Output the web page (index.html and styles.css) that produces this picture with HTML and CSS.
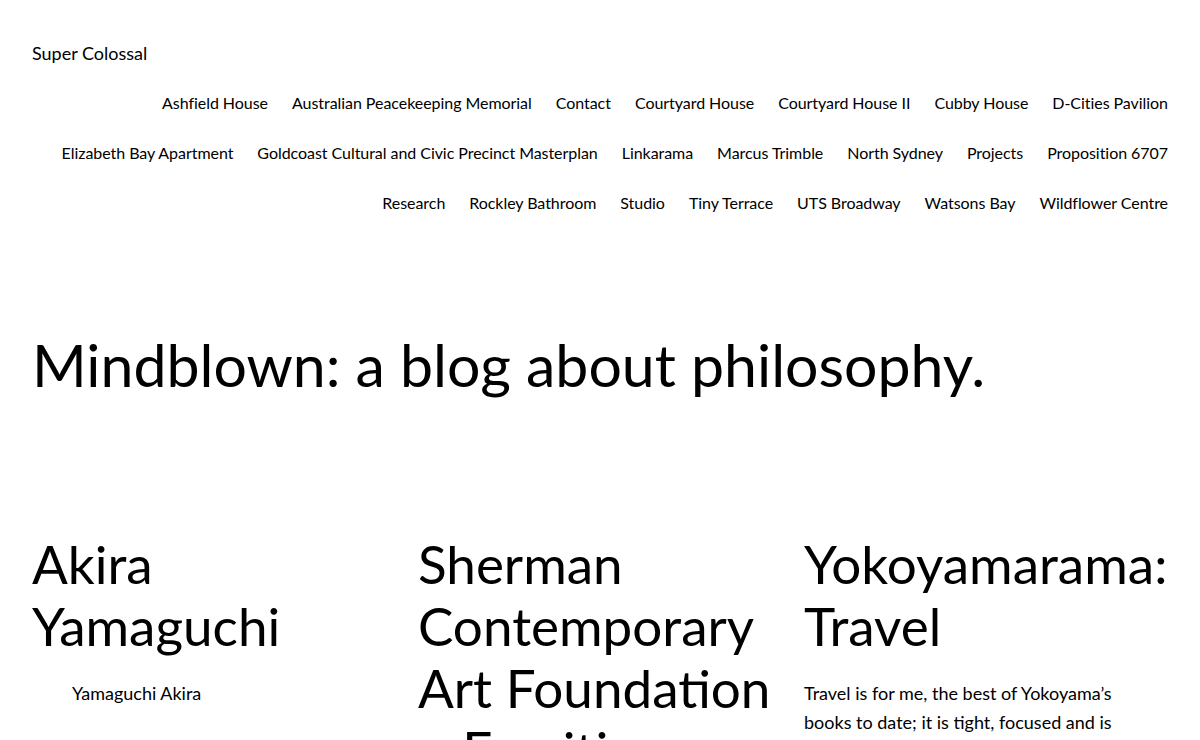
FILE: index.html
```html
<!DOCTYPE html>
<html lang="en">
<head>
<meta charset="utf-8">
<title>Mindblown: a blog about philosophy.</title>
<link rel="stylesheet" href="styles.css">
</head>
<body>
<header class="site-header">
  <p class="site-title"><a href="#">Super Colossal</a></p>
  <nav class="site-nav">
    <ul class="nav-list">
      <li><a href="#">Ashfield House</a></li>
      <li><a href="#">Australian Peacekeeping Memorial</a></li>
      <li><a href="#">Contact</a></li>
      <li><a href="#">Courtyard House</a></li>
      <li><a href="#">Courtyard House II</a></li>
      <li><a href="#">Cubby House</a></li>
      <li><a href="#">D-Cities Pavilion</a></li>
      <li><a href="#">Elizabeth Bay Apartment</a></li>
      <li><a href="#">Goldcoast Cultural and Civic Precinct Masterplan</a></li>
      <li><a href="#">Linkarama</a></li>
      <li><a href="#">Marcus Trimble</a></li>
      <li><a href="#">North Sydney</a></li>
      <li><a href="#">Projects</a></li>
      <li><a href="#">Proposition 6707</a></li>
      <li><a href="#">Research</a></li>
      <li><a href="#">Rockley Bathroom</a></li>
      <li><a href="#">Studio</a></li>
      <li><a href="#">Tiny Terrace</a></li>
      <li><a href="#">UTS Broadway</a></li>
      <li><a href="#">Watsons Bay</a></li>
      <li><a href="#">Wildflower Centre</a></li>
    </ul>
  </nav>
</header>
<main class="main">
  <h1 class="page-title">Mindblown: a blog about philosophy.</h1>
  <section class="posts">
    <article class="post">
      <h2 class="post-title"><a href="#">Akira Yamaguchi</a></h2>
      <p class="post-note">Yamaguchi Akira</p>
    </article>
    <article class="post">
      <h2 class="post-title"><a href="#">Sherman Contemporary Art Foundation – Fragities</a></h2>
    </article>
    <article class="post">
      <h2 class="post-title"><a href="#">Yokoyamarama: Travel</a></h2>
      <p class="post-excerpt">Travel is for me, the best of Yokoyama’s books to date; it is tight, focused and is beautifully produced.</p>
    </article>
  </section>
</main>
</body>
</html>
```
FILE: styles.css
```css
html, body {
  margin: 0;
  padding: 0;
  background: #ffffff;
  color: #000000;
  font-family: "Lato", "Open Sans", sans-serif;
}
a {
  color: inherit;
  text-decoration: none;
}
.site-header {
  padding: 40px 32px 0;
}
.site-title {
  margin: 0;
  font-size: 18px;
  line-height: 27px;
}
.site-nav {
  margin-top: 23px;
}
.nav-list {
  list-style: none;
  margin: 0;
  padding: 0;
  display: flex;
  flex-wrap: wrap;
  justify-content: flex-end;
  column-gap: 24px;
  row-gap: 24px;
  font-size: 16px;
  line-height: 26px;
  letter-spacing: -0.05px;
}
.main {
  padding: 0 32px;
}
.page-title {
  margin: 113px 0 0;
  font-weight: 400;
  font-size: 59px;
  line-height: 72px;
}
.posts {
  margin-top: 132px;
  display: grid;
  grid-template-columns: repeat(3, minmax(0, 1fr));
  column-gap: 22px;
}
.post-title {
  margin: 0;
  font-weight: 400;
  font-size: 53px;
  line-height: 62px;
}
.post-note {
  margin: 22px 0 0 40px;
  font-size: 18px;
  line-height: 29px;
}
.post-excerpt {
  margin: 22px 0 0;
  max-width: 335px;
  font-size: 18px;
  line-height: 29px;
}
```
